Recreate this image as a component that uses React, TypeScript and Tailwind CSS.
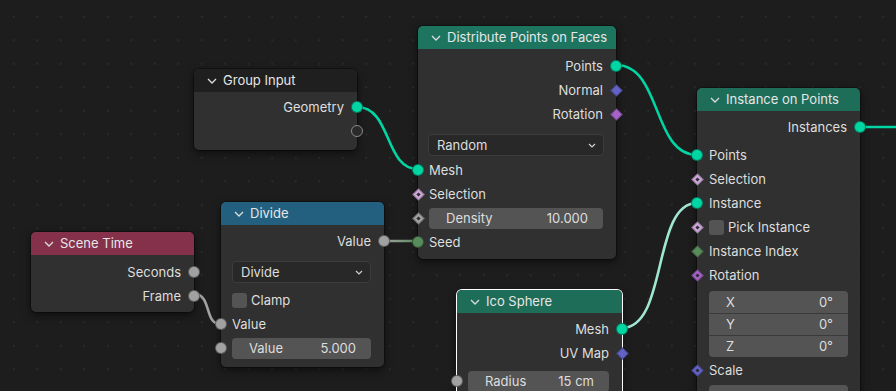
import React from "react";

type Kind = "geo" | "float" | "int" | "vec" | "rot" | "bool" | "empty";

const fills: Record<string, string> = {
  geo: "bg-[#00d6a3]",
  float: "bg-[#a1a1a1]",
  int: "bg-[#598c5c]",
  vec: "bg-[#6363c7]",
  rot: "bg-[#a663c7]",
  bool: "bg-[#cca6d6]",
};

function Socket({
  kind,
  side,
  diamond = false,
  dot = false,
}: {
  kind: Kind;
  side: "left" | "right";
  diamond?: boolean;
  dot?: boolean;
}) {
  const pos = side === "left" ? "left-[-6px]" : "right-[-6px]";
  if (kind === "empty") {
    return (
      <span
        className={`absolute ${pos} top-1/2 -translate-y-1/2 w-[12px] h-[12px] rounded-full bg-[#2a2a2a] border border-[#8a8a8a]`}
      />
    );
  }
  if (diamond) {
    return (
      <span
        className={`absolute ${pos} top-1/2 -translate-y-1/2 w-[12px] h-[12px] flex items-center justify-center`}
      >
        <span
          className={`w-[9px] h-[9px] shrink-0 rotate-45 ${fills[kind]} border border-black/30 flex items-center justify-center`}
        >
          {dot && <span className="w-[3px] h-[3px] bg-[#2c2c2c]" />}
        </span>
      </span>
    );
  }
  return (
    <span
      className={`absolute ${pos} top-1/2 -translate-y-1/2 w-[12px] h-[12px] rounded-full ${fills[kind]} border border-black/40`}
    />
  );
}

function Chevron() {
  return (
    <svg width="10" height="6" viewBox="0 0 10 6">
      <path d="M1 1 L5 5 L9 1" fill="none" stroke="#dcdcdc" strokeWidth="1.3" />
    </svg>
  );
}

function Node({
  className,
  header,
  title,
  bodyClass,
  selected = false,
  children,
}: {
  className: string;
  header: string;
  title: string;
  bodyClass: string;
  selected?: boolean;
  children: React.ReactNode;
}) {
  return (
    <div
      className={`absolute rounded-[5px] bg-[#303030] shadow-[0_3px_8px_rgba(0,0,0,0.55)] ${
        selected ? "ring-1 ring-white" : "ring-1 ring-black/30"
      } ${className}`}
    >
      <div
        className={`h-[23px] rounded-t-[5px] flex items-center pl-[13px] gap-[6px] text-[#e6e6e6] ${header}`}
      >
        <Chevron />
        <span>{title}</span>
      </div>
      <div className={bodyClass}>{children}</div>
    </div>
  );
}

function Out({ label, kind, diamond }: { label: string; kind: Kind; diamond?: boolean }) {
  return (
    <div className="relative h-6 flex items-center justify-end pr-[13px]">
      <span>{label}</span>
      <Socket kind={kind} side="right" diamond={diamond} />
    </div>
  );
}

function In({
  label,
  kind,
  diamond,
  dot,
  className = "",
}: {
  label: string;
  kind: Kind;
  diamond?: boolean;
  dot?: boolean;
  className?: string;
}) {
  return (
    <div className={`relative h-6 flex items-center pl-[11px] ${className}`}>
      <span>{label}</span>
      <Socket kind={kind} side="left" diamond={diamond} dot={dot} />
    </div>
  );
}

function Dropdown({ label }: { label: string }) {
  return (
    <div className="h-[22px] rounded-[4px] bg-[#282828] border border-[#3c3c3c] flex items-center justify-between pl-[8px] pr-[7px]">
      <span>{label}</span>
      <svg width="8" height="5" viewBox="0 0 8 5">
        <path d="M1 1 L4 4 L7 1" fill="none" stroke="#d0d0d0" strokeWidth="1.2" />
      </svg>
    </div>
  );
}

function Field({ label, value }: { label: string; value: string }) {
  return (
    <div className="flex-1 h-[21px] rounded-[4px] bg-[#545454] flex items-center justify-between pl-[17px] pr-[15px]">
      <span>{label}</span>
      <span>{value}</span>
    </div>
  );
}

function Check({ label }: { label: string }) {
  return (
    <div className="flex items-center gap-[4px]">
      <span className="w-[15px] h-[15px] rounded-[3px] bg-[#545454]" />
      <span>{label}</span>
    </div>
  );
}

function Wires() {
  return (
    <svg className="absolute inset-0" width="896" height="391">
      <defs>
        <linearGradient id="seed" gradientUnits="userSpaceOnUse" x1="384" y1="0" x2="418" y2="0">
          <stop offset="0" stopColor="#a1a1a1" />
          <stop offset="1" stopColor="#5a8c5c" />
        </linearGradient>
      </defs>
      <g fill="none" strokeWidth="2.6" strokeLinecap="round">
        <path d="M357 107 C 392 107, 384 169, 418 169" stroke="#00d6a3" />
        <path d="M616 65 C 662 65, 652 155, 697 155" stroke="#00d6a3" />
        <path d="M860 127 L 900 127" stroke="#00d6a3" />
        <path d="M194 294 C 212 294, 204 324, 220 324" stroke="#a1a1a1" />
        <path d="M384 241 L 418 241" stroke="url(#seed)" />
        <path d="M622 328 C 668 328, 652 203, 697 203" stroke="#9fe6d3" />
      </g>
    </svg>
  );
}

export default function App() {
  return (
    <div className="relative w-[896px] h-[391px] overflow-hidden bg-[#1d1d1d] bg-[radial-gradient(circle,#2b2b2b_1px,transparent_1.3px)] bg-size-[23.5px_23.5px] bg-position-[2px_5px] font-[Inter,sans-serif] text-[13px] leading-none text-[#dedede]">
      <Wires />

      {/* Group Input */}
      <Node
        className="left-[194px] top-[69px] w-[163px]"
        header="bg-[#1f1f1f]"
        title="Group Input"
        bodyClass="pt-[3px] pb-[7px]"
      >
        <Out label="Geometry" kind="geo" />
        <div className="relative h-6">
          <Socket kind="empty" side="right" />
        </div>
      </Node>

      {/* Distribute Points on Faces */}
      <Node
        className="left-[418px] top-[26px] w-[198px]"
        header="bg-[#1e755f] h-[22px]"
        title="Distribute Points on Faces"
        bodyClass="pt-[5px] pb-[5px]"
      >
        <Out label="Points" kind="geo" />
        <Out label="Normal" kind="vec" diamond />
        <Out label="Rotation" kind="rot" diamond />
        <div className="pl-[10px] pr-[12px] mt-[8px] mb-[2px]">
          <Dropdown label="Random" />
        </div>
        <In label="Mesh" kind="geo" />
        <In label="Selection" kind="bool" diamond dot />
        <div className="relative h-6 flex items-center pl-[11px] pr-[13px]">
          <Field label="Density" value="10.000" />
          <Socket kind="float" side="left" diamond dot />
        </div>
        <In label="Seed" kind="int" />
      </Node>

      {/* Scene Time */}
      <Node
        className="left-[31px] top-[232px] w-[163px]"
        header="bg-[#85314b] h-[22px]"
        title="Scene Time"
        bodyClass="pt-[5px] pb-[4px]"
      >
        <Out label="Seconds" kind="float" />
        <Out label="Frame" kind="float" />
      </Node>

      {/* Divide */}
      <Node
        className="left-[221px] top-[202px] w-[163px]"
        header="bg-[#23607f]"
        title="Divide"
        bodyClass="pt-[4px] pb-[7px]"
      >
        <Out label="Value" kind="float" />
        <div className="pl-[11px] pr-[13px] mt-[8px]">
          <Dropdown label="Divide" />
        </div>
        <div className="h-6 flex items-center pl-[11px] mt-[5px]">
          <Check label="Clamp" />
        </div>
        <In label="Value" kind="float" />
        <div className="relative h-6 flex items-center pl-[11px] pr-[13px]">
          <Field label="Value" value="5.000" />
          <Socket kind="float" side="left" />
        </div>
      </Node>

      {/* Ico Sphere */}
      <Node
        className="left-[457px] top-[290px] w-[165px]"
        header="bg-[#1e6d59]"
        title="Ico Sphere"
        bodyClass="pt-[4px] pb-[30px]"
        selected
      >
        <Out label="Mesh" kind="geo" />
        <Out label="UV Map" kind="vec" diamond />
        <div className="relative h-6 flex items-center pl-[11px] pr-[13px] mt-[4px]">
          <Field label="Radius" value="15 cm" />
          <Socket kind="float" side="left" />
        </div>
      </Node>

      {/* Instance on Points */}
      <Node
        className="left-[697px] top-[88px] w-[163px]"
        header="bg-[#1e6d59]"
        title="Instance on Points"
        bodyClass="pt-[4px] pb-[6px]"
      >
        <Out label="Instances" kind="geo" />
        <In label="Points" kind="geo" className="mt-[4px] pl-[12px]" />
        <In label="Selection" kind="bool" diamond dot className="pl-[12px]" />
        <In label="Instance" kind="geo" className="pl-[12px]" />
        <div className="relative h-6 flex items-center pl-[12px]">
          <Check label="Pick Instance" />
          <Socket kind="bool" side="left" diamond dot />
        </div>
        <In label="Instance Index" kind="int" diamond className="pl-[12px]" />
        <In label="Rotation" kind="rot" diamond dot className="pl-[12px]" />
        <div className="px-[12px] mt-[4px]">
          <div className="rounded-[4px] bg-[#545454] flex flex-col">
            {[
              ["X", "0°"],
              ["Y", "0°"],
              ["Z", "0°"],
            ].map(([a, v], i) => (
              <div
                key={a}
                className={`h-[22px] flex items-center justify-between pl-[17px] pr-[15px] ${
                  i > 0 ? "border-t border-[#3a3a3a]" : ""
                }`}
              >
                <span>{a}</span>
                <span>{v}</span>
              </div>
            ))}
          </div>
        </div>
        <In label="Scale" kind="vec" diamond dot className="pl-[12px] mt-[1px]" />
        <div className="px-[12px] mt-[3px]">
          <div className="h-[66px] rounded-[4px] bg-[#545454]" />
        </div>
      </Node>
    </div>
  );
}
